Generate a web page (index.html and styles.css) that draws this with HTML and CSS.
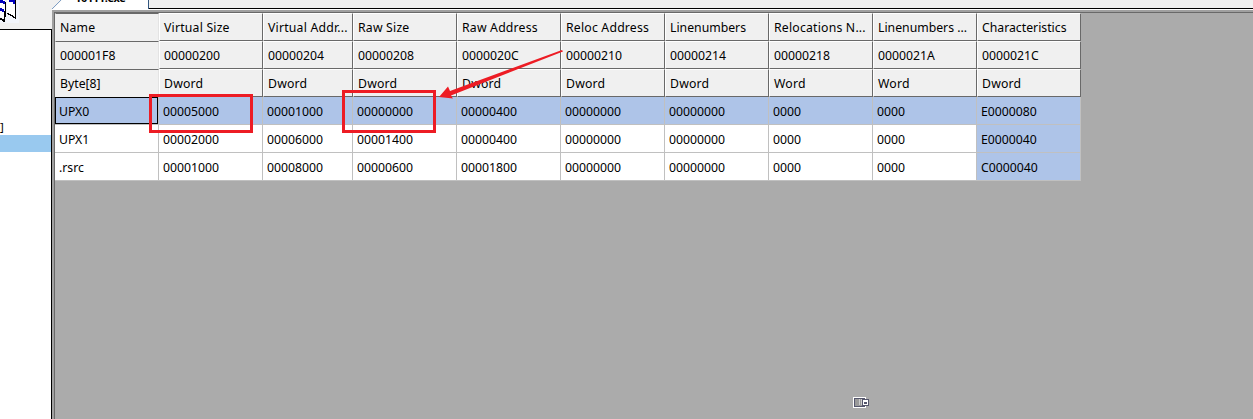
FILE: index.html
```
<!DOCTYPE html>
<html lang="en">
<head>
<meta charset="utf-8">
<title>Section Headers</title>
<link rel="stylesheet" href="styles.css">
</head>
<body>
<div class="app">
  <aside class="side">
    <div class="toolbar">
      <svg width="20" height="29" viewBox="0 0 20 29" shape-rendering="crispEdges">
        <rect width="19" height="23" fill="#f2f5fb"/>
        <path d="M7 0H15V18L7 13Z" fill="#fff"/>
        <path d="M9 0H15V4H13V2H9Z" fill="#0000c0"/>
        <path d="M15 0H16V19H15V18H13V17H12V16H10V15H8V14H7V13H9V14H11V15H13V16H14V17H15Z" fill="#000"/>
        <path d="M0 0H5V19L0 17Z" fill="#fff"/>
        <path d="M0 0H3V1H5V4H3V3H0Z" fill="#0000c0"/>
        <path d="M5 2H6V17H5Z" fill="#000"/>
        <path d="M0 8H2V9H4V12H2V11H0Z" fill="#0000c0"/>
        <path d="M4 11H5V22H3V21H2V20H0V18H2V19H4Z" fill="#000"/>
      </svg>
    </div>
    <div class="tree">
      <div class="tree-item">]</div>
      <div class="tree-item selected"></div>
    </div>
  </aside>
  <main class="main">
    <div class="tabs">
      <div class="tab"><span class="tab-label">10111.exe</span></div>
      <svg class="tab-edge" width="17" height="10" viewBox="0 0 17 10"><path d="M1 9L10 0H17V10H1Z" fill="#fff"/><path d="M0 9L9 0" stroke="#7f9fc5" fill="none"/></svg>
    </div>
    <div class="frame">
      <div class="grid">
        <div class="cell head title first top">Name</div><div class="cell head title">Virtual Size</div><div class="cell head title">Virtual Addr...</div><div class="cell head title">Raw Size</div><div class="cell head title">Raw Address</div><div class="cell head title">Reloc Address</div><div class="cell head">Linenumbers</div><div class="cell head title">Relocations N...</div><div class="cell head">Linenumbers ...</div><div class="cell head">Characteristics</div>
        <div class="cell head first">000001F8</div><div class="cell head">00000200</div><div class="cell head">00000204</div><div class="cell head">00000208</div><div class="cell head">0000020C</div><div class="cell head">00000210</div><div class="cell head">00000214</div><div class="cell head">00000218</div><div class="cell head">0000021A</div><div class="cell head">0000021C</div>
        <div class="cell head first">Byte[8]</div><div class="cell head title">Dword</div><div class="cell head title">Dword</div><div class="cell head title">Dword</div><div class="cell head title">Dword</div><div class="cell head title">Dword</div><div class="cell head title">Dword</div><div class="cell head title">Word</div><div class="cell head title">Word</div><div class="cell head title">Dword</div>
        <div class="cell blue focus">UPX0</div><div class="cell blue">00005000</div><div class="cell blue">00001000</div><div class="cell blue">00000000</div><div class="cell blue">00000400</div><div class="cell blue">00000000</div><div class="cell blue">00000000</div><div class="cell blue">0000</div><div class="cell blue">0000</div><div class="cell blue">E0000080</div>
        <div class="cell">UPX1</div><div class="cell">00002000</div><div class="cell">00006000</div><div class="cell">00001400</div><div class="cell">00000400</div><div class="cell">00000000</div><div class="cell">00000000</div><div class="cell">0000</div><div class="cell">0000</div><div class="cell blue">E0000040</div>
        <div class="cell">.rsrc</div><div class="cell">00001000</div><div class="cell">00008000</div><div class="cell">00000600</div><div class="cell">00001800</div><div class="cell">00000000</div><div class="cell">00000000</div><div class="cell">0000</div><div class="cell">0000</div><div class="cell blue">C0000040</div>
      </div>
    </div>
  </main>
  <svg class="notes" width="1253" height="419" viewBox="0 0 1253 419">
    <g fill="none" stroke="#ed1c24" stroke-width="3">
      <rect x="150.500" y="95.500" width="101" height="36"/>
      <rect x="343.500" y="91.500" width="91" height="40"/>
    </g>
    <path d="M562 50L563 51.500L451 95.500L453 98.500L439 97L448 86.500L450 91Z" fill="#ed1c24"/>
    <g shape-rendering="crispEdges">
      <rect x="853" y="397" width="13" height="11" fill="#fff"/>
      <rect x="854" y="398" width="11" height="9" fill="#55566c"/>
      <rect x="855" y="399" width="9" height="7" fill="#9a9a9a"/>
      <rect x="859" y="399" width="1" height="6" fill="#ccc"/><rect x="861" y="399" width="1" height="6" fill="#ccc"/>
      <rect x="862" y="399" width="7" height="7" fill="#55566c"/>
      <rect x="863" y="400" width="5" height="5" fill="#fff"/>
      <rect x="864" y="402" width="3" height="2" fill="#55566c"/>
    </g>
  </svg>
</div>
</body>
</html>
```
FILE: styles.css
```
* { box-sizing: border-box; }
body { margin: 0; font: 12.25px/16px "Noto Sans", "Open Sans", sans-serif; color: #000; }
.app { position: relative; display: flex; width: 1253px; height: 419px; overflow: hidden; background: #f0f0f0; }
.side { width: 52px; display: flex; flex-direction: column; flex: none; }
.toolbar { height: 29px; overflow: hidden; }
.toolbar svg { display: block; }
.tree { flex: 1; background: #fff; border-top: 1px solid #000; border-right: 1px solid #000; padding-top: 89px; }
.tree-item { height: 16px; line-height: 16px; font-size: 11.5px; }
.tree-item.selected { height: 17px; background: #99c9ef; }
.main { flex: 1; min-width: 0; display: flex; flex-direction: column; }
.tabs { position: relative; height: 10px; flex: none; border-bottom: 1px solid #fff; background: linear-gradient(#000, #000) 96px 8px / 1200px 1px no-repeat #f0f0f0; }
.tab { margin-left: 17px; width: 80px; height: 9px; overflow: hidden; background: #fff; border-right: 1px solid #33577f; }
.tab-label { display: block; margin: -10px 0 0 6px; font-size: 11px; letter-spacing: -0.35px; line-height: 16px; font-weight: 700; }
.tab-edge { position: absolute; left: 0; top: 0; }
.frame { flex: 1; background: #ababab; border-top: 2px solid #a0a0a0; border-left: 2px solid #a0a0a0; box-shadow: inset 1px 1px #696969; padding: 1px 0 0 1px; }
.grid { display: grid; grid-template-columns: 104px 104px 90px repeat(7, 104px); grid-auto-rows: 28px; width: 1026px; }
.cell { padding: 7px 0 0 4px; background: #fff; border-right: 1px solid #c0c0c0; border-bottom: 1px solid #c0c0c0; white-space: nowrap; overflow: hidden; }
.cell.head { padding: 6px 0 0 4px; background: #f0f0f0; border-right-color: #696969; border-bottom-color: #696969; border-top: 1px solid #fff; border-left: 1px solid #fff; }
.cell.title { letter-spacing: 0.2px; }
.cell.head.first { border-color: #696969 #e3e3e3 #f0f0f0 #f0f0f0; }
.cell.head.first.top { border-top-color: #696969; }
.cell.focus { box-shadow: inset 0 0 0 1px #000; }
.cell.blue { background: #aec4e8; }
.notes { position: absolute; left: 0; top: 0; pointer-events: none; }
```
